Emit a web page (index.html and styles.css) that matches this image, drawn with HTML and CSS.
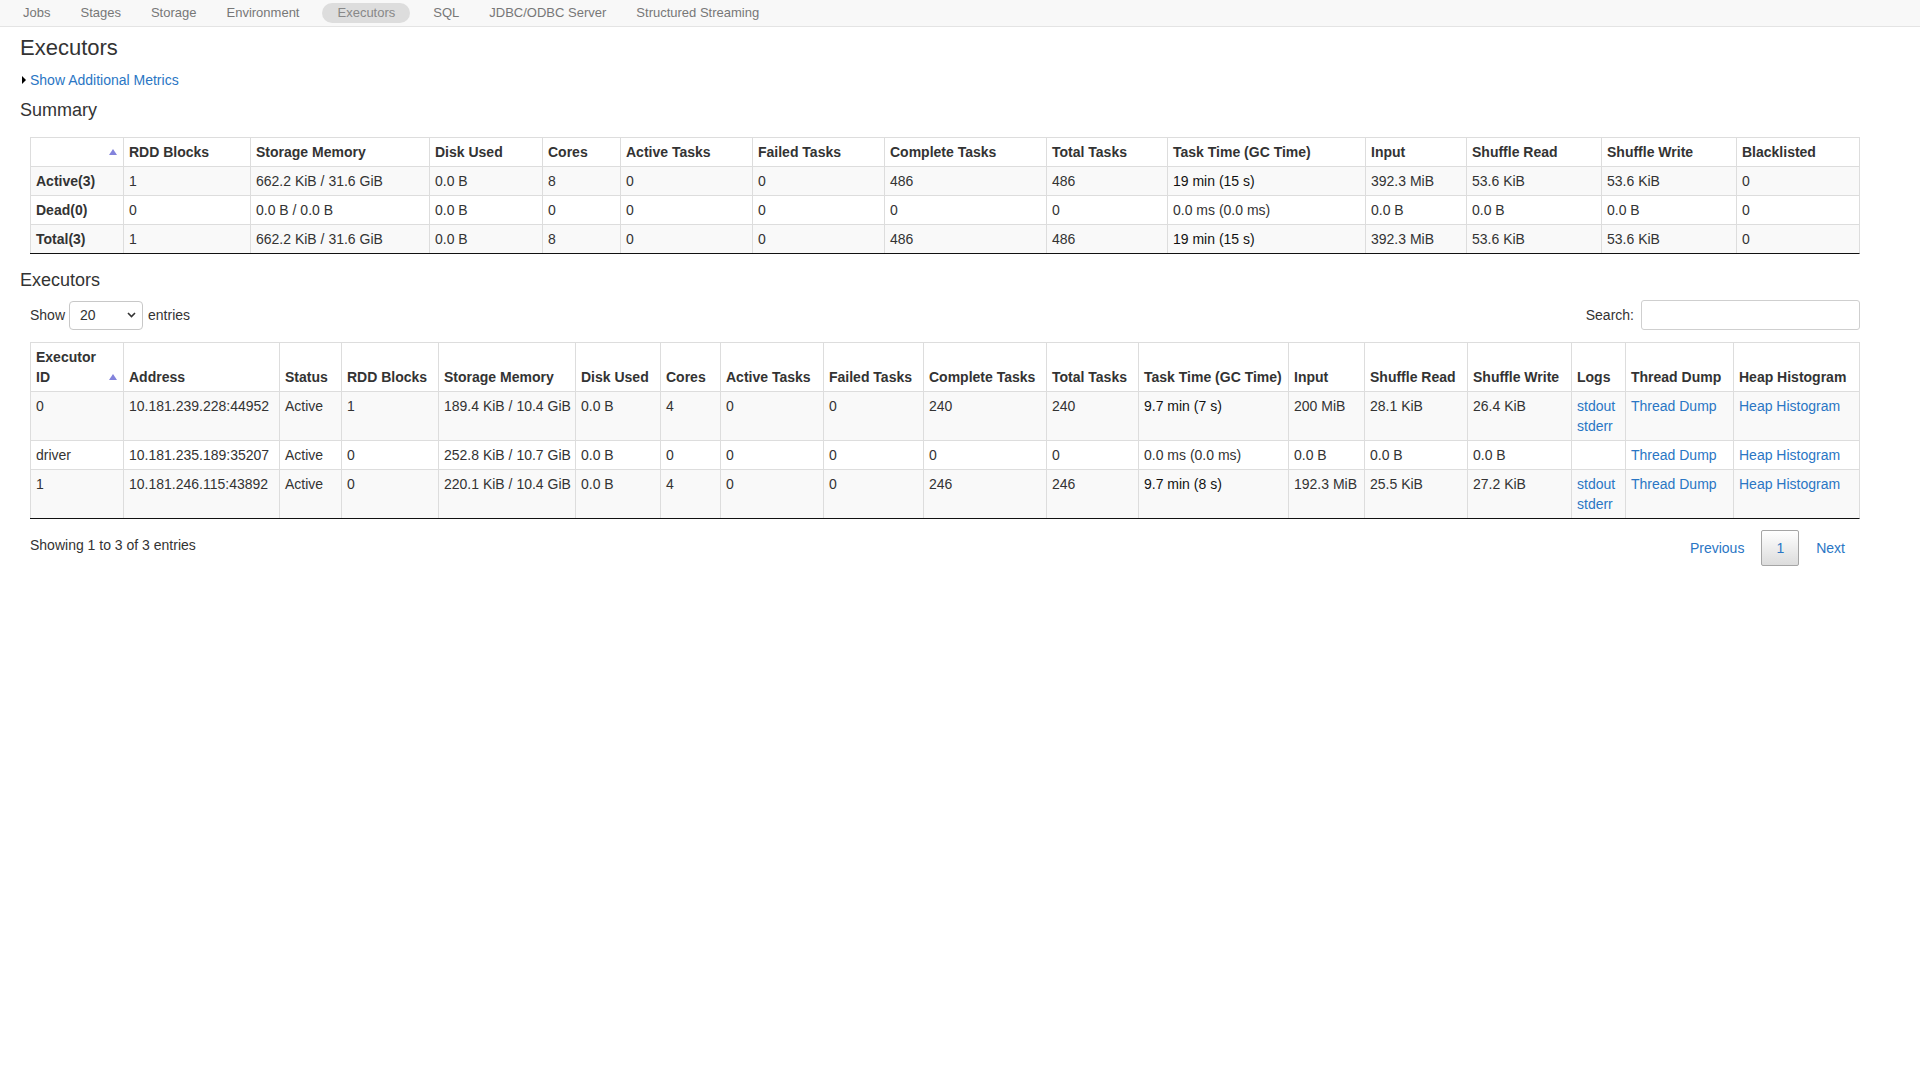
FILE: index.html
```html
<!DOCTYPE html>
<html lang="en">
<head>
<meta charset="utf-8">
<title>Executors</title>
<link rel="stylesheet" href="styles.css">
</head>
<body>
<nav class="navbar">
  <ul class="nav-links">
    <li><a href="#">Jobs</a></li>
    <li><a href="#">Stages</a></li>
    <li><a href="#">Storage</a></li>
    <li><a href="#">Environment</a></li>
    <li><a href="#" class="active">Executors</a></li>
    <li><a href="#">SQL</a></li>
    <li><a href="#">JDBC/ODBC Server</a></li>
    <li><a href="#">Structured Streaming</a></li>
  </ul>
</nav>
<main class="page">
  <h3 class="page-title">Executors</h3>
  <div class="metrics-toggle"><span class="arrow-closed"></span><a href="#">Show Additional Metrics</a></div>

  <h4 class="section-title">Summary</h4>
  <table class="grid summary">
    <thead>
      <tr>
        <th class="sorted"><span class="sort-icon"></span></th>
        <th>RDD Blocks</th>
        <th>Storage Memory</th>
        <th>Disk Used</th>
        <th>Cores</th>
        <th>Active Tasks</th>
        <th>Failed Tasks</th>
        <th>Complete Tasks</th>
        <th>Total Tasks</th>
        <th>Task Time (GC Time)</th>
        <th>Input</th>
        <th>Shuffle Read</th>
        <th>Shuffle Write</th>
        <th>Blacklisted</th>
      </tr>
    </thead>
    <tbody>
      <tr>
        <td class="rowhead">Active(3)</td><td>1</td><td>662.2 KiB / 31.6 GiB</td><td>0.0 B</td><td>8</td><td>0</td><td>0</td><td>486</td><td>486</td><td class="tt">19 min (15 s)</td><td>392.3 MiB</td><td>53.6 KiB</td><td>53.6 KiB</td><td>0</td>
      </tr>
      <tr>
        <td class="rowhead">Dead(0)</td><td>0</td><td>0.0 B / 0.0 B</td><td>0.0 B</td><td>0</td><td>0</td><td>0</td><td>0</td><td>0</td><td>0.0 ms (0.0 ms)</td><td>0.0 B</td><td>0.0 B</td><td>0.0 B</td><td>0</td>
      </tr>
      <tr>
        <td class="rowhead">Total(3)</td><td>1</td><td>662.2 KiB / 31.6 GiB</td><td>0.0 B</td><td>8</td><td>0</td><td>0</td><td>486</td><td>486</td><td class="tt">19 min (15 s)</td><td>392.3 MiB</td><td>53.6 KiB</td><td>53.6 KiB</td><td>0</td>
      </tr>
    </tbody>
  </table>

  <h4 class="section-title exec-title">Executors</h4>
  <div class="table-controls">
    <label class="length">Show
      <span class="select"><span>20</span><svg width="9" height="6" viewBox="0 0 9 6"><path d="M1 1l3.5 3.5L8 1" stroke="#333" stroke-width="1.6" fill="none"/></svg></span>
      entries</label>
    <label class="filter">Search:<span class="search-input"></span></label>
  </div>

  <table class="grid executors">
    <thead>
      <tr>
        <th class="sorted">Executor ID<span class="sort-icon"></span></th>
        <th>Address</th>
        <th>Status</th>
        <th>RDD Blocks</th>
        <th>Storage Memory</th>
        <th>Disk Used</th>
        <th>Cores</th>
        <th>Active Tasks</th>
        <th>Failed Tasks</th>
        <th>Complete Tasks</th>
        <th>Total Tasks</th>
        <th>Task Time (GC Time)</th>
        <th>Input</th>
        <th>Shuffle Read</th>
        <th>Shuffle Write</th>
        <th>Logs</th>
        <th>Thread Dump</th>
        <th>Heap Histogram</th>
      </tr>
    </thead>
    <tbody>
      <tr>
        <td>0</td><td>10.181.239.228:44952</td><td>Active</td><td>1</td><td>189.4 KiB / 10.4 GiB</td><td>0.0 B</td><td>4</td><td>0</td><td>0</td><td>240</td><td>240</td><td class="tt">9.7 min (7 s)</td><td>200 MiB</td><td>28.1 KiB</td><td>26.4 KiB</td>
        <td><div><a href="#">stdout</a></div><div><a href="#">stderr</a></div></td>
        <td><a href="#">Thread Dump</a></td><td><a href="#">Heap Histogram</a></td>
      </tr>
      <tr>
        <td>driver</td><td>10.181.235.189:35207</td><td>Active</td><td>0</td><td>252.8 KiB / 10.7 GiB</td><td>0.0 B</td><td>0</td><td>0</td><td>0</td><td>0</td><td>0</td><td>0.0 ms (0.0 ms)</td><td>0.0 B</td><td>0.0 B</td><td>0.0 B</td>
        <td></td>
        <td><a href="#">Thread Dump</a></td><td><a href="#">Heap Histogram</a></td>
      </tr>
      <tr>
        <td>1</td><td>10.181.246.115:43892</td><td>Active</td><td>0</td><td>220.1 KiB / 10.4 GiB</td><td>0.0 B</td><td>4</td><td>0</td><td>0</td><td>246</td><td>246</td><td class="tt">9.7 min (8 s)</td><td>192.3 MiB</td><td>25.5 KiB</td><td>27.2 KiB</td>
        <td><div><a href="#">stdout</a></div><div><a href="#">stderr</a></div></td>
        <td><a href="#">Thread Dump</a></td><td><a href="#">Heap Histogram</a></td>
      </tr>
    </tbody>
  </table>

  <div class="table-footer">
    <div class="info">Showing 1 to 3 of 3 entries</div>
    <div class="paginate">
      <a href="#" class="page-btn">Previous</a>
      <a href="#" class="page-btn current">1</a>
      <a href="#" class="page-btn">Next</a>
    </div>
  </div>
</main>
</body>
</html>
```

FILE: styles.css
```css
* { box-sizing: border-box; }

html, body {
  margin: 0;
  padding: 0;
  background: #fff;
}

body {
  font-family: "Liberation Sans", Arial, Helvetica, sans-serif;
  font-size: 14px;
  line-height: 20px;
  color: #333;
}

a {
  color: #2a76c4;
  text-decoration: none;
}

/* ---------- top navigation ---------- */
.navbar {
  height: 27px;
  padding: 3px 0 3px 8px;
  background: #f8f8f8;
  border-bottom: 1px solid #e4e4e4;
}

.nav-links {
  display: flex;
  margin: 0;
  padding: 0;
  list-style: none;
}

.nav-links a {
  display: block;
  padding: 0 15px;
  font-size: 13px;
  line-height: 20px;
  color: #777;
  border-radius: 10px;
}

.nav-links a.active {
  margin: 0 8px;
  background: #dddddd;
  color: #888;
}

/* ---------- page ---------- */
.page {
  padding: 0 60px 0 20px;
}

.page-title {
  margin: 8px 0 9px;
  font-size: 22px;
  line-height: 26px;
  font-weight: normal;
}

.metrics-toggle {
  display: flex;
  align-items: center;
  margin-bottom: 10px;
  padding-left: 2px;
}

.arrow-closed {
  width: 0;
  height: 0;
  margin-right: 4px;
  border-top: 4px solid transparent;
  border-bottom: 4px solid transparent;
  border-left: 4px solid #000;
}

.section-title {
  margin: 0 0 17px;
  font-size: 18px;
  line-height: 20px;
  font-weight: normal;
}

.exec-title {
  margin: 16px 0 10px;
}

/* ---------- tables ---------- */
.grid {
  width: calc(100% - 10px);
  margin-left: 10px;
  table-layout: fixed;
  border-collapse: separate;
  border-spacing: 0;
  border-top: 1px solid #ddd;
  border-right: 1px solid #ddd;
  border-bottom: 1px solid #111;
}

.grid th,
.grid td {
  padding: 4px 5px;
  line-height: 20px;
  text-align: left;
  white-space: nowrap;
  border-left: 1px solid #ddd;
  border-bottom: 1px solid #ddd;
}

.grid th {
  position: relative;
  font-weight: bold;
  vertical-align: bottom;
  background: #fff;
}

.grid th.sorted {
  padding-right: 20px;
  white-space: normal;
}

.sort-icon {
  position: absolute;
  right: 6px;
  bottom: 11px;
  width: 0;
  height: 0;
  border-left: 4px solid transparent;
  border-right: 4px solid transparent;
  border-bottom: 6px solid #8383dc;
}

.grid td {
  vertical-align: top;
}

.grid tbody tr:nth-child(odd) td {
  background: #f9f9f9;
}

.grid tbody tr:last-child td {
  border-bottom: none;
}

.grid td.rowhead {
  font-weight: bold;
}

.grid td.tt {
  color: #111;
}

/* summary column widths */
.summary th:nth-child(1)  { width: 93px; }
.summary th:nth-child(2)  { width: 127px; }
.summary th:nth-child(3)  { width: 179px; }
.summary th:nth-child(4)  { width: 113px; }
.summary th:nth-child(5)  { width: 78px; }
.summary th:nth-child(6)  { width: 132px; }
.summary th:nth-child(7)  { width: 132px; }
.summary th:nth-child(8)  { width: 162px; }
.summary th:nth-child(9)  { width: 121px; }
.summary th:nth-child(10) { width: 198px; }
.summary th:nth-child(11) { width: 101px; }
.summary th:nth-child(12) { width: 135px; }
.summary th:nth-child(13) { width: 135px; }
.summary th:nth-child(14) { width: 123px; }

/* executors column widths */
.executors th:nth-child(1)  { width: 93px; }
.executors th:nth-child(2)  { width: 156px; }
.executors th:nth-child(3)  { width: 62px; }
.executors th:nth-child(4)  { width: 97px; }
.executors th:nth-child(5)  { width: 137px; }
.executors th:nth-child(6)  { width: 85px; }
.executors th:nth-child(7)  { width: 60px; }
.executors th:nth-child(8)  { width: 103px; }
.executors th:nth-child(9)  { width: 100px; }
.executors th:nth-child(10) { width: 123px; }
.executors th:nth-child(11) { width: 92px; }
.executors th:nth-child(12) { width: 150px; }
.executors th:nth-child(13) { width: 76px; }
.executors th:nth-child(14) { width: 103px; }
.executors th:nth-child(15) { width: 104px; }
.executors th:nth-child(16) { width: 54px; }
.executors th:nth-child(17) { width: 108px; }
.executors th:nth-child(18) { width: 126px; }

/* ---------- datatable controls ---------- */
.table-controls {
  display: flex;
  justify-content: space-between;
  align-items: center;
  height: 30px;
  margin: 0 0 12px 10px;
}

.length,
.filter {
  display: flex;
  align-items: center;
}

.select {
  display: flex;
  align-items: center;
  justify-content: space-between;
  width: 74px;
  height: 29px;
  margin: 0 5px 0 4px;
  padding: 0 6px 0 10px;
  border: 1px solid #c8c8c8;
  border-radius: 4px;
  background: #fff;
  color: #333;
}

.search-input {
  display: block;
  width: 219px;
  height: 30px;
  margin-left: 7px;
  border: 1px solid #cfcfcf;
  border-radius: 3px;
  background: #fff;
}

.table-footer {
  display: flex;
  justify-content: space-between;
  align-items: flex-start;
  margin: 11px 0 0 10px;
}

.info {
  padding-top: 5px;
}

.paginate {
  display: flex;
}

.page-btn {
  display: block;
  margin-left: 2px;
  padding: 7px 14px;
  line-height: 20px;
  border: 1px solid transparent;
  border-radius: 2px;
}

.page-btn.current {
  border-color: #a5a5a5;
  background: linear-gradient(to bottom, #ffffff 0%, #dcdcdc 100%);
}
```
